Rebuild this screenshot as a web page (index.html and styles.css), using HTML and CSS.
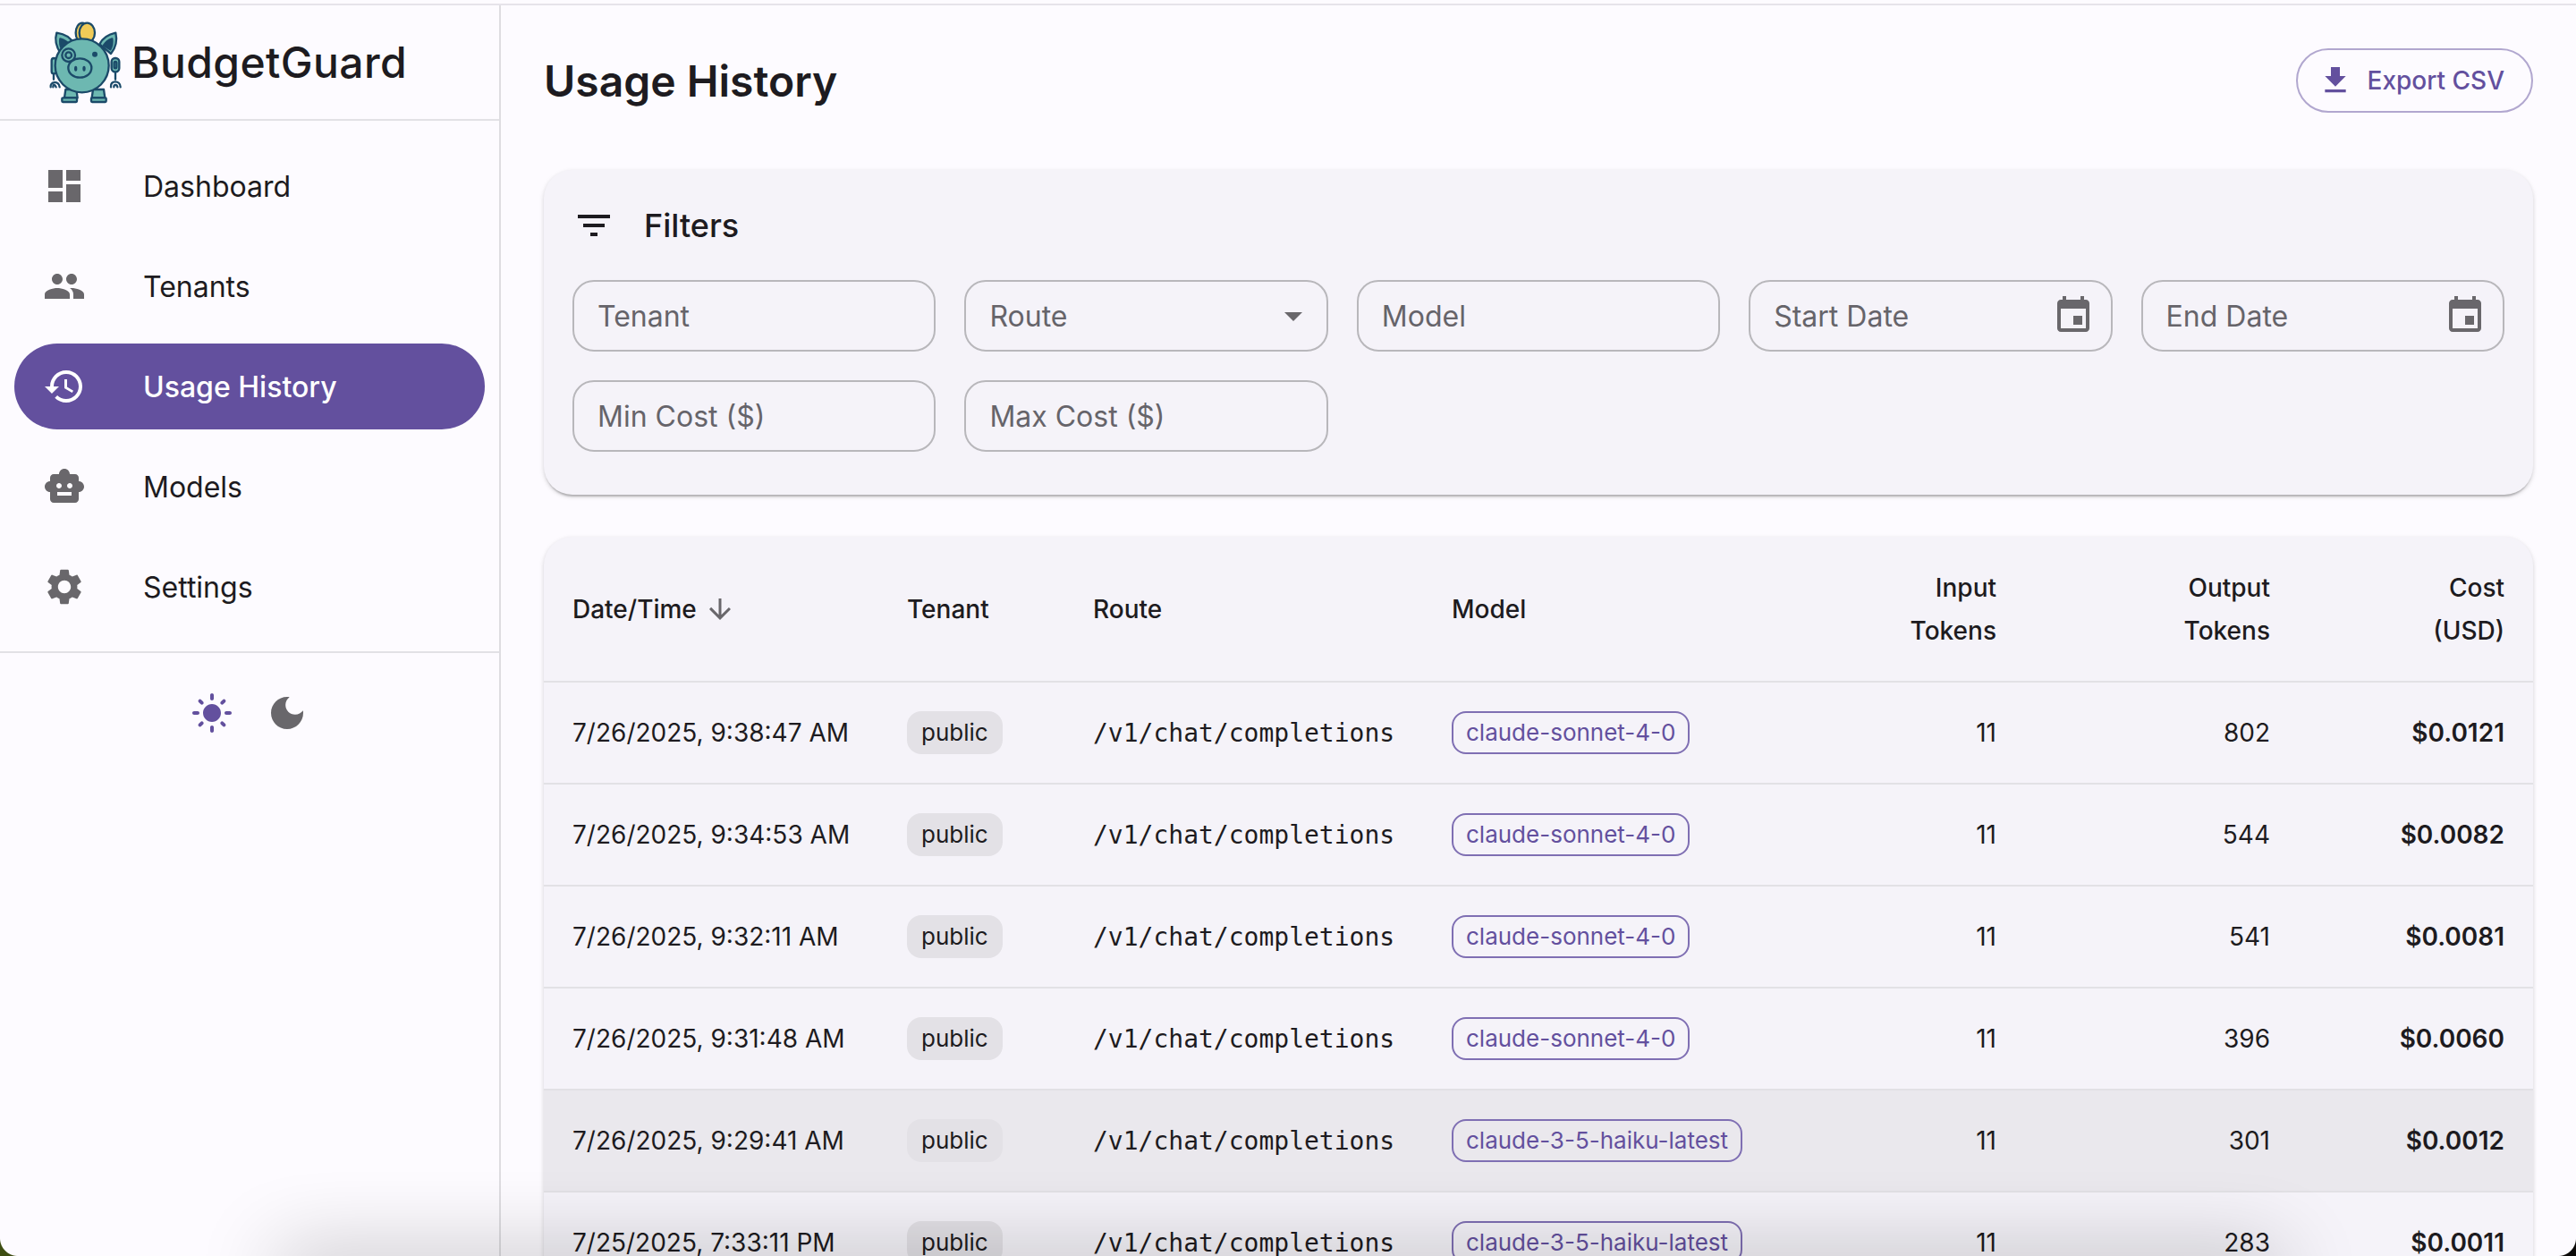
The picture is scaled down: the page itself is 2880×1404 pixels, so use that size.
FILE: index.html
```html
<!DOCTYPE html>
<html lang="en">
<head>
    <meta charset="UTF-8">
    <title>BudgetGuard - Usage History</title>
    <link rel="stylesheet" href="styles.css">
</head>
<body>

<div class="app">
    <aside class="sidebar">
        <div class="brand">
            <svg class="brand-logo" viewBox="30 36 276 288">
                <g stroke="#1b4a69" stroke-width="7" stroke-linejoin="round" stroke-linecap="round">
                    <ellipse cx="156" cy="80" rx="22" ry="33" fill="#f0cb58"/>
                    <ellipse cx="172" cy="80" rx="26" ry="33" fill="#f0cb58"/>
                    <path d="M70 80 C98 84 118 96 128 118 L84 150 C70 130 62 106 70 80Z" fill="#6db8b1"/>
                    <path d="M268 80 C240 86 224 98 214 118 L252 150 C268 130 274 106 268 80Z" fill="#6db8b1"/>
                    <path d="M82 100 C96 104 106 110 112 120 L88 136 C82 124 80 112 82 100Z" fill="#1b4a69"/>
                    <path d="M256 100 C244 104 234 112 228 122 L250 136 C256 124 258 112 256 100Z" fill="#1b4a69"/>
                    <path d="M60 216 V236 M267 212 V236" fill="none"/>
                    <rect x="53" y="165" width="16" height="52" rx="8" fill="#6db8b1"/>
                    <path d="M50 262 C46 244 78 238 80 262 M68 262 C64 252 58 252 58 262" fill="none"/>
                    <path d="M252 262 C248 238 284 238 284 262 M274 262 C272 252 262 252 262 262" fill="none"/>
                    <path d="M100 270 H136 L140 298 H96Z" fill="#6db8b1"/>
                    <path d="M192 270 H228 L232 298 H188Z" fill="#6db8b1"/>
                    <rect x="88" y="298" width="50" height="14" rx="3" fill="#6db8b1"/>
                    <rect x="186" y="298" width="50" height="14" rx="3" fill="#6db8b1"/>
                    <circle cx="155" cy="190" r="90" fill="#6db8b1"/>
                    <rect x="254" y="165" width="26" height="46" rx="12" fill="#6db8b1"/>
                    <rect x="263" y="177" width="8" height="22" rx="4" fill="#6db8b1"/>
                    <circle cx="110" cy="155" r="22" fill="#6db8b1"/>
                    <circle cx="110" cy="155" r="10" fill="#6db8b1"/>
                    <ellipse cx="148" cy="198" rx="39" ry="32" fill="#6db8b1"/>
                </g>
                <g fill="#1b4a69">
                    <circle cx="198" cy="152" r="9"/>
                    <ellipse cx="134" cy="200" rx="5" ry="9"/>
                    <ellipse cx="162" cy="200" rx="5" ry="9"/>
                </g>
            </svg>
            <span class="brand-name">BudgetGuard</span>
        </div>

        <nav class="nav">
            <a class="nav-item">
                <svg class="icon nav-icon" viewBox="0 0 24 24"><path d="M3 13h8V3H3v10zm0 8h8v-6H3v6zm10 0h8V11h-8v10zm0-18v6h8V3h-8z"/></svg>
                <span>Dashboard</span>
            </a>
            <a class="nav-item">
                <svg class="icon nav-icon" viewBox="0 0 24 24"><path d="M16 11c1.66 0 2.99-1.34 2.99-3S17.66 5 16 5c-1.66 0-3 1.34-3 3s1.34 3 3 3zm-8 0c1.66 0 2.99-1.34 2.99-3S9.66 5 8 5C6.34 5 5 6.34 5 8s1.34 3 3 3zm0 2c-2.33 0-7 1.17-7 3.5V19h14v-2.5c0-2.33-4.67-3.5-7-3.5zm8 0c-.29 0-.62.02-.97.05 1.16.84 1.97 1.97 1.97 3.45V19h6v-2.5c0-2.33-4.67-3.5-7-3.5z"/></svg>
                <span>Tenants</span>
            </a>
            <a class="nav-item active">
                <svg class="icon nav-icon" viewBox="0 0 24 24"><path d="M13 3c-4.97 0-9 4.03-9 9H1l3.89 3.89.07.14L9 12H6c0-3.87 3.13-7 7-7s7 3.13 7 7-3.13 7-7 7c-1.93 0-3.68-.79-4.94-2.06l-1.42 1.42C8.27 19.99 10.51 21 13 21c4.97 0 9-4.03 9-9s-4.03-9-9-9zm-1 5v5l4.28 2.54.72-1.21-3.5-2.08V8H12z"/></svg>
                <span>Usage History</span>
            </a>
            <a class="nav-item">
                <svg class="icon nav-icon" viewBox="0 0 24 24"><path d="M20 9V7c0-1.1-.9-2-2-2h-3c0-1.66-1.34-3-3-3S9 3.34 9 5H6c-1.1 0-2 .9-2 2v2c-1.66 0-3 1.34-3 3s1.34 3 3 3v4c0 1.1.9 2 2 2h12c1.1 0 2-.9 2-2v-4c1.66 0 3-1.34 3-3s-1.34-3-3-3zM7.5 11.5c0-.83.67-1.5 1.5-1.5s1.5.67 1.5 1.5S9.83 13 9 13s-1.5-.67-1.5-1.5zM16 17H8v-2h8v2zm-1-4c-.83 0-1.5-.67-1.5-1.5S14.17 10 15 10s1.5.67 1.5 1.5S15.83 13 15 13z"/></svg>
                <span>Models</span>
            </a>
            <a class="nav-item">
                <svg class="icon nav-icon" viewBox="0 0 24 24"><path d="M19.14 12.94c.04-.3.06-.61.06-.94 0-.32-.02-.64-.07-.94l2.03-1.58c.18-.14.23-.41.12-.61l-1.92-3.32c-.12-.22-.37-.29-.59-.22l-2.39.96c-.5-.38-1.03-.7-1.62-.94l-.36-2.54c-.04-.24-.24-.41-.48-.41h-3.84c-.24 0-.43.17-.47.41l-.36 2.54c-.59.24-1.13.57-1.62.94l-2.39-.96c-.22-.08-.47 0-.59.22L2.74 8.87c-.12.21-.08.47.12.61l2.03 1.58c-.05.3-.09.63-.09.94s.02.64.07.94l-2.03 1.58c-.18.14-.23.41-.12.61l1.92 3.32c.12.22.37.29.59.22l2.39-.96c.5.38 1.03.7 1.62.94l.36 2.54c.05.24.24.41.48.41h3.84c.24 0 .44-.17.47-.41l.36-2.54c.59-.24 1.13-.56 1.62-.94l2.39.96c.22.08.47 0 .59-.22l1.92-3.32c.12-.22.07-.47-.12-.61l-2.01-1.58zM12 15.6c-1.98 0-3.6-1.62-3.6-3.6s1.62-3.6 3.6-3.6 3.6 1.62 3.6 3.6-1.62 3.6-3.6 3.6z"/></svg>
                <span>Settings</span>
            </a>
        </nav>

        <div class="theme-toggle">
            <svg class="icon theme-icon selected" viewBox="0 0 24 24"><path d="M12 7c-2.76 0-5 2.24-5 5s2.24 5 5 5 5-2.24 5-5-2.24-5-5-5zM2 13h2c.55 0 1-.45 1-1s-.45-1-1-1H2c-.55 0-1 .45-1 1s.45 1 1 1zm18 0h2c.55 0 1-.45 1-1s-.45-1-1-1h-2c-.55 0-1 .45-1 1s.45 1 1 1zM11 2v2c0 .55.45 1 1 1s1-.45 1-1V2c0-.55-.45-1-1-1s-1 .45-1 1zm0 18v2c0 .55.45 1 1 1s1-.45 1-1v-2c0-.55-.45-1-1-1s-1 .45-1 1zM5.99 4.58c-.39-.39-1.03-.39-1.41 0-.39.39-.39 1.03 0 1.41l1.06 1.06c.39.39 1.03.39 1.41 0s.39-1.03 0-1.41L5.99 4.58zm12.37 12.37c-.39-.39-1.03-.39-1.41 0-.39.39-.39 1.03 0 1.41l1.06 1.06c.39.39 1.03.39 1.41 0 .39-.39.39-1.03 0-1.41l-1.06-1.06zm1.06-10.96c.39-.39.39-1.03 0-1.41-.39-.39-1.03-.39-1.41 0l-1.06 1.06c-.39.39-.39 1.03 0 1.41s1.03.39 1.41 0l1.06-1.06zM7.05 18.36c.39-.39.39-1.03 0-1.41-.39-.39-1.03-.39-1.41 0l-1.06 1.06c-.39.39-.39 1.03 0 1.41s1.03.39 1.41 0l1.06-1.06z"/></svg>
            <svg class="icon theme-icon" viewBox="0 0 24 24"><path d="M12 3c-4.97 0-9 4.03-9 9s4.03 9 9 9 9-4.03 9-9c0-.46-.04-.92-.1-1.36-.98 1.37-2.58 2.26-4.4 2.26-2.98 0-5.4-2.42-5.4-5.4 0-1.81.89-3.42 2.26-4.4-.44-.06-.9-.1-1.36-.1z"/></svg>
        </div>
    </aside>

    <main class="content">
        <header class="page-head">
            <h1>Usage History</h1>
            <button class="export-btn">
                <svg class="icon export-icon" viewBox="0 0 24 24"><path d="M5 20h14v-2H5v2zM19 9h-4V3H9v6H5l7 7 7-7z"/></svg>
                Export CSV
            </button>
        </header>

        <section class="card filters">
            <div class="filters-title">
                <svg class="icon filter-icon" viewBox="0 0 24 24"><path d="M10 18h4v-2h-4v2zM3 6v2h18V6H3zm3 7h12v-2H6v2z"/></svg>
                <h2>Filters</h2>
            </div>
            <div class="filters-grid">
                <div class="field"><span>Tenant</span></div>
                <div class="field field-select">
                    <span>Route</span>
                    <svg class="icon" viewBox="0 0 24 24"><path d="M7 10l5 5 5-5z"/></svg>
                </div>
                <div class="field"><span>Model</span></div>
                <div class="field field-date">
                    <span>Start Date</span>
                    <svg class="icon" viewBox="0 0 24 24"><path d="M17 12h-5v5h5v-5zM16 1v2H8V1H6v2H5c-1.11 0-1.99.9-1.99 2L3 19c0 1.1.89 2 2 2h14c1.1 0 2-.9 2-2V5c0-1.1-.9-2-2-2h-1V1h-2zm3 18H5V8h14v11z"/></svg>
                </div>
                <div class="field field-date">
                    <span>End Date</span>
                    <svg class="icon" viewBox="0 0 24 24"><path d="M17 12h-5v5h5v-5zM16 1v2H8V1H6v2H5c-1.11 0-1.99.9-1.99 2L3 19c0 1.1.89 2 2 2h14c1.1 0 2-.9 2-2V5c0-1.1-.9-2-2-2h-1V1h-2zm3 18H5V8h14v11z"/></svg>
                </div>
                <div class="field"><span>Min Cost ($)</span></div>
                <div class="field"><span>Max Cost ($)</span></div>
            </div>
        </section>

        <section class="card table-card">
            <table class="usage-table">
                <colgroup>
                    <col class="col-date">
                    <col class="col-tenant">
                    <col class="col-route">
                    <col class="col-model">
                    <col class="col-input">
                    <col class="col-output">
                    <col class="col-cost">
                </colgroup>
                <thead>
                    <tr>
                        <th><span class="sort-head">Date/Time
                            <svg class="icon sort-icon" viewBox="0 0 24 24"><path d="M20 12l-1.41-1.41L13 16.17V4h-2v12.17l-5.58-5.59L4 12l8 8 8-8z"/></svg>
                        </span></th>
                        <th>Tenant</th>
                        <th>Route</th>
                        <th>Model</th>
                        <th class="num">Input<br>Tokens</th>
                        <th class="num">Output<br>Tokens</th>
                        <th class="num">Cost<br>(USD)</th>
                    </tr>
                </thead>
                <tbody>
                    <tr>
                        <td>7/26/2025, 9:38:47 AM</td>
                        <td><span class="chip">public</span></td>
                        <td class="route">/v1/chat/completions</td>
                        <td><span class="chip chip-model">claude-sonnet-4-0</span></td>
                        <td class="num">11</td>
                        <td class="num">802</td>
                        <td class="num cost">$0.0121</td>
                    </tr>
                    <tr>
                        <td>7/26/2025, 9:34:53 AM</td>
                        <td><span class="chip">public</span></td>
                        <td class="route">/v1/chat/completions</td>
                        <td><span class="chip chip-model">claude-sonnet-4-0</span></td>
                        <td class="num">11</td>
                        <td class="num">544</td>
                        <td class="num cost">$0.0082</td>
                    </tr>
                    <tr>
                        <td>7/26/2025, 9:32:11 AM</td>
                        <td><span class="chip">public</span></td>
                        <td class="route">/v1/chat/completions</td>
                        <td><span class="chip chip-model">claude-sonnet-4-0</span></td>
                        <td class="num">11</td>
                        <td class="num">541</td>
                        <td class="num cost">$0.0081</td>
                    </tr>
                    <tr>
                        <td>7/26/2025, 9:31:48 AM</td>
                        <td><span class="chip">public</span></td>
                        <td class="route">/v1/chat/completions</td>
                        <td><span class="chip chip-model">claude-sonnet-4-0</span></td>
                        <td class="num">11</td>
                        <td class="num">396</td>
                        <td class="num cost">$0.0060</td>
                    </tr>
                    <tr class="hovered">
                        <td>7/26/2025, 9:29:41 AM</td>
                        <td><span class="chip">public</span></td>
                        <td class="route">/v1/chat/completions</td>
                        <td><span class="chip chip-model">claude-3-5-haiku-latest</span></td>
                        <td class="num">11</td>
                        <td class="num">301</td>
                        <td class="num cost">$0.0012</td>
                    </tr>
                    <tr>
                        <td>7/25/2025, 7:33:11 PM</td>
                        <td><span class="chip">public</span></td>
                        <td class="route">/v1/chat/completions</td>
                        <td><span class="chip chip-model">claude-3-5-haiku-latest</span></td>
                        <td class="num">11</td>
                        <td class="num">283</td>
                        <td class="num cost">$0.0011</td>
                    </tr>
                </tbody>
            </table>
        </section>
    </main>
</div>

<!-- soft shadow of whatever sits below the window, plus the window's rounded corners -->
<div class="dock-shadow"></div>
<div class="corner corner-left"></div>
<div class="corner corner-right"></div>

</body>
</html>
```

FILE: styles.css
```css
* {
    box-sizing: border-box;
}
html, body {
    margin: 0;
    height: 100%;
    overflow: hidden;
}
body {
    font-family: Inter, "Liberation Sans", sans-serif;
    color: #1d1b20;
    background-color: #fdfbff;
}
h1, h2 {
    margin: 0;
}
.icon {
    display: block;
    fill: currentColor;
    flex-shrink: 0;
}

.app {
    display: flex;
    height: 1404px;
    border-top: 2px solid #e6e3ea;
    margin-top: 4px;
}

/* sidebar */
.sidebar {
    width: 560px;
    flex-shrink: 0;
    border-right: 2px solid #dedde1;
}
.brand {
    display: flex;
    align-items: center;
    height: 129px;
    padding-left: 50px;
    border-bottom: 2px solid #e2e1e5;
}
.brand-logo {
    width: 92px;
    height: 96px;
}
.brand-name {
    margin-left: 5px;
    font-size: 48px;
    font-weight: 500;
    letter-spacing: 0.4px;
}
.nav {
    display: flex;
    flex-direction: column;
    gap: 16px;
    padding: 25px 16px 24px;
    border-bottom: 2px solid #e2e1e5;
}
.nav-item {
    display: flex;
    align-items: center;
    height: 96px;
    padding-left: 32px;
    border-radius: 48px;
    font-size: 32px;
}
.nav-icon {
    width: 48px;
    height: 48px;
    margin-right: 64px;
    color: #69676b;
}
.nav-item.active {
    background-color: #63509e;
    color: #fff;
    font-weight: 500;
}
.nav-item.active .nav-icon {
    color: #fff;
}
.theme-toggle {
    display: flex;
    justify-content: center;
    gap: 36px;
    padding-top: 43px;
}
.theme-icon {
    width: 48px;
    height: 48px;
    color: #69676b;
}
.theme-icon.selected {
    color: #63509e;
}

/* main area */
.content {
    flex: 1;
    min-width: 0;
    padding: 48px 48px 0;
}
.page-head {
    display: flex;
    align-items: center;
    justify-content: space-between;
    height: 72px;
    margin-bottom: 64px;
}
.page-head h1 {
    font-size: 48px;
    font-weight: 600;
}
.export-btn {
    display: flex;
    align-items: center;
    height: 72px;
    padding: 0 30px 0 22px;
    border: 2px solid #b1a7cf;
    border-radius: 36px;
    background: transparent;
    color: #63509e;
    font-family: inherit;
    font-size: 28px;
    font-weight: 500;
}
.export-icon {
    width: 40px;
    height: 40px;
    margin-right: 16px;
}
.card {
    background-color: #f5f3f9;
    border-radius: 32px;
    box-shadow: 0 4px 2px -2px rgba(0, 0, 0, 0.2), 0 2px 4px rgba(0, 0, 0, 0.1), 0 2px 6px rgba(0, 0, 0, 0.08);
}

/* filters */
.filters {
    padding: 32px 32px 48px;
    margin-bottom: 47px;
}
.filters-title {
    display: flex;
    align-items: center;
    gap: 32px;
    height: 60px;
    margin-bottom: 31px;
}
.filter-icon {
    width: 48px;
    height: 48px;
}
.filters-title h2 {
    font-size: 36px;
    font-weight: 500;
}
.filters-grid {
    display: grid;
    grid-template-columns: repeat(5, 1fr);
    gap: 32px;
}
.field {
    display: flex;
    align-items: center;
    justify-content: space-between;
    height: 80px;
    padding: 0 13px 0 26px;
    border: 2px solid #b8b7bb;
    border-radius: 24px;
    font-size: 32px;
    color: #66646a;
}
.field .icon {
    width: 48px;
    height: 48px;
    color: #69676b;
}
.field-date {
    padding-right: 18px;
}

/* table */
.table-card {
    overflow: hidden;
}
.usage-table {
    width: 100%;
    table-layout: fixed;
    border-collapse: collapse;
    font-size: 28px;
}
.col-date { width: 374px; }
.col-tenant { width: 208px; }
.col-route { width: 401px; }
.col-model { width: 500px; }
.col-input { width: 173px; }
.col-output { width: 306px; }
.col-cost { width: 262px; }
.usage-table th,
.usage-table td {
    padding: 0 32px;
    border-bottom: 2px solid #e2e1e5;
    text-align: left;
    white-space: nowrap;
}
.usage-table th {
    height: 162px;
    font-weight: 500;
    line-height: 48px;
}
.usage-table td {
    height: 114px;
}
.usage-table .num {
    text-align: right;
}
.sort-head {
    display: inline-flex;
    align-items: center;
}
.sort-icon {
    width: 36px;
    height: 36px;
    margin-left: 8px;
    color: #69676b;
}
.route {
    font-family: "DejaVu Sans Mono", "Liberation Mono", monospace;
}
.chip {
    display: inline-block;
    height: 48px;
    padding: 0 16px;
    border-radius: 16px;
    background-color: #e3e1e6;
    font-size: 26px;
    line-height: 48px;
}
.chip-model {
    padding: 0 14px;
    border: 2px solid #7f6fb3;
    background: transparent;
    color: #63509e;
    line-height: 44px;
}
.cost {
    font-weight: 600;
}
.hovered td {
    background-color: #eae8ed;
}

/* things lying over the page */
.dock-shadow {
    position: absolute;
    left: 310px;
    right: 330px;
    bottom: -40px;
    height: 40px;
    box-shadow: 0 0 90px rgba(0, 0, 0, 0.32);
    pointer-events: none;
}
.corner {
    position: absolute;
    bottom: 0;
    width: 20px;
    height: 20px;
    pointer-events: none;
}
.corner-left {
    left: 0;
    background: radial-gradient(circle at top right, transparent 19.5px, #3e4d12 20.5px);
}
.corner-right {
    right: 0;
    background: radial-gradient(circle at top left, transparent 19.5px, #0c0a08 20.5px);
}
```
